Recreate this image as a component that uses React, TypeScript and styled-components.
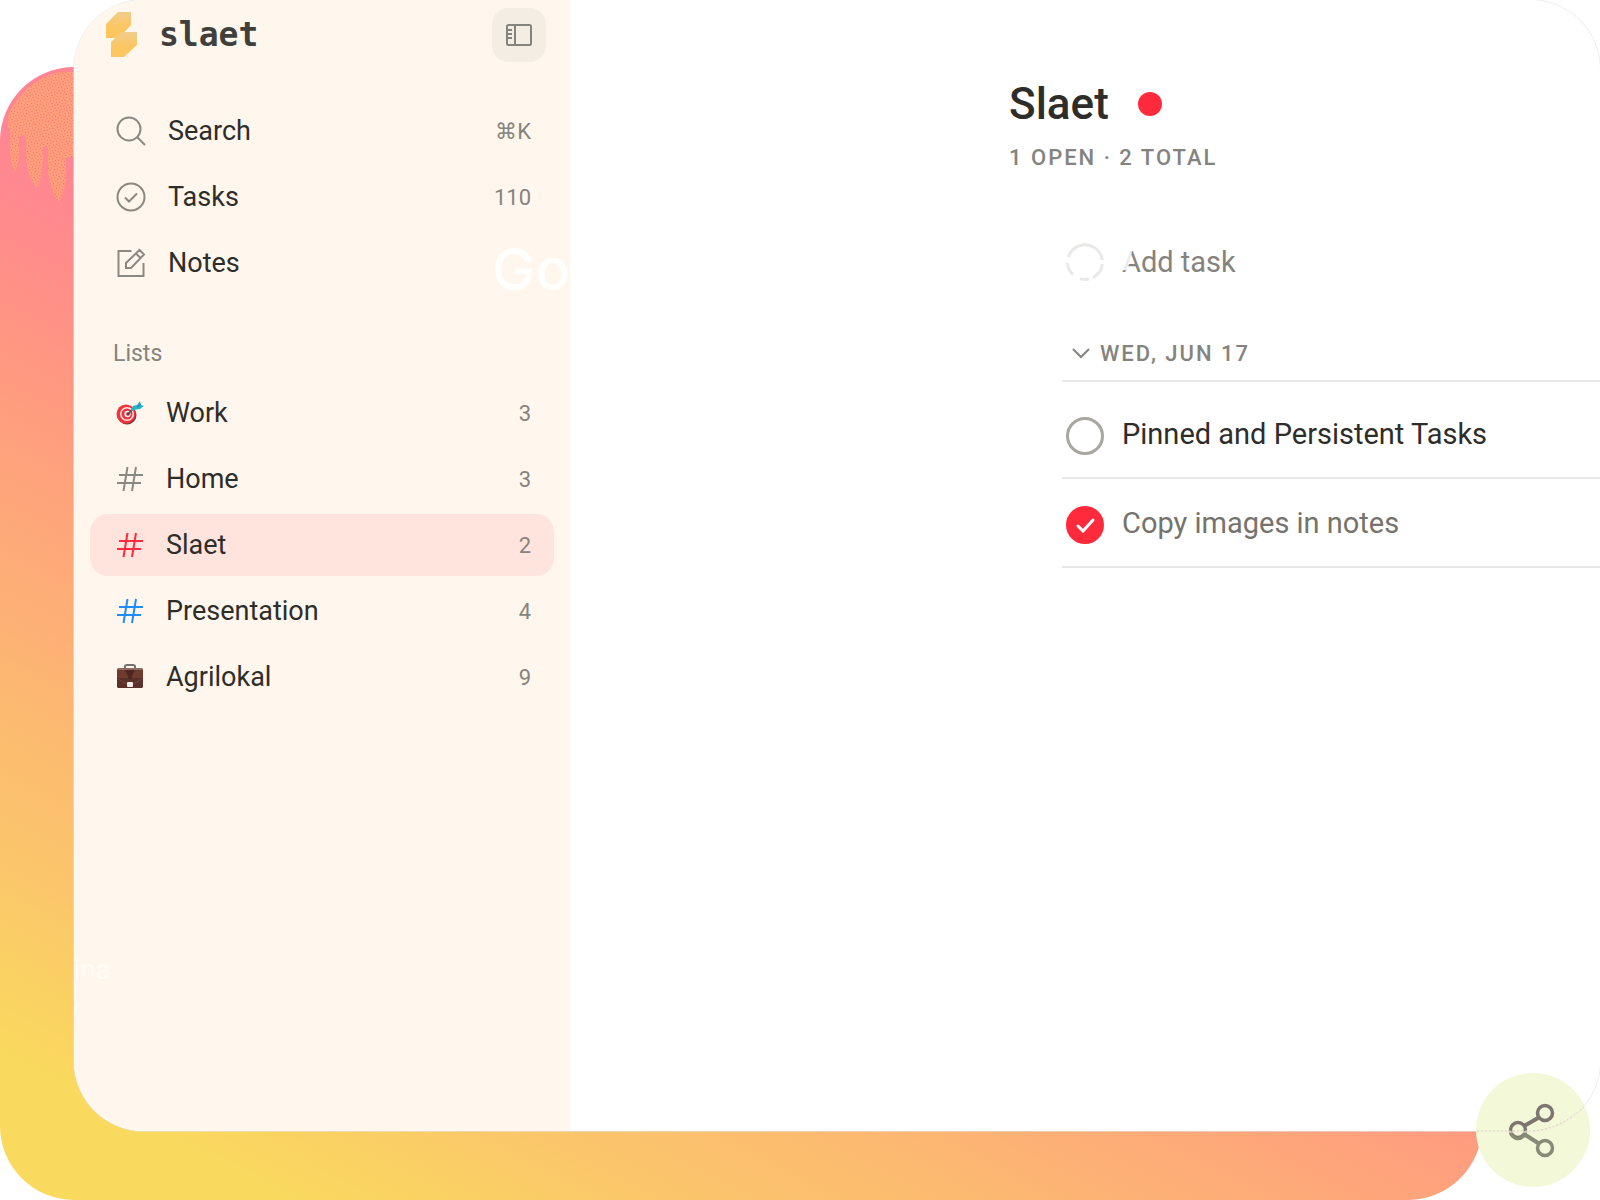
import React, { useState } from "react";
import styled, { createGlobalStyle } from "styled-components";

const GlobalStyle = createGlobalStyle`
  *, *::before, *::after { box-sizing: border-box; }
  body {
    margin: 0;
    background: #ffffff;
    color: #2e2d29;
    font-family: Roboto, "Liberation Sans", sans-serif;
  }
  button, input { font: inherit; color: inherit; }
`;

const Stage = styled.div`
  position: relative;
  display: grid;
  min-height: 100vh;
  overflow: hidden;
`;

const Backdrop = styled.div`
  grid-area: 1 / 1;
  margin: 67px 118px 0 0;
  border-radius: 74px;
  overflow: hidden;
  background: linear-gradient(
    27deg,
    #fad95f 0%,
    #fad95f 8%,
    #fad163 12%,
    #fbc66b 18%,
    #fcba70 26%,
    #fdaf76 32%,
    #fea57b 38%,
    #ff9881 45%,
    #ff8e89 50%,
    #ff8594 57%,
    #ff8594 100%
  );
`;

const Window = styled.div`
  grid-area: 1 / 1;
  display: grid;
  grid-template-columns: 496px 1fr;
  margin: 0 0 69px 74px;
  border-radius: 70px;
  overflow: hidden;
  background: #ffffff;
  box-shadow: 0 0 0 1px rgba(226, 226, 226, 0.6);
`;

const Sidebar = styled.aside`
  position: relative;
  overflow: hidden;
  padding: 8px 16px;
  background: #fff7ed;
`;

const Brand = styled.header`
  display: flex;
  align-items: center;
  height: 54px;
  padding: 0 8px 0 15px;
`;

const BrandName = styled.span`
  flex: 1;
  margin-left: 22px;
  color: #403f3b;
  font: bold 33px/40px "DejaVu Sans Mono", "Liberation Mono", monospace;
`;

const PanelToggle = styled.button`
  display: grid;
  place-items: center;
  width: 54px;
  height: 54px;
  padding: 0;
  border: 0;
  border-radius: 16px;
  background: #f4ede4;
  color: #85837e;
`;

const Nav = styled.nav`
  display: flex;
  flex-direction: column;
  gap: 4px;
  margin-top: 38px;
`;

const ListNav = styled(Nav)`
  margin-top: 14px;
`;

const NavRow = styled.a<{ $active?: boolean }>`
  display: flex;
  align-items: center;
  height: 62px;
  padding: 0 23px 0 26px;
  border-radius: 18px;
  background: ${(p) => (p.$active ? "#ffe4de" : "transparent")};
  color: #2e2d29;
  text-decoration: none;
  font-size: 27px;
  line-height: 32px;
`;

const IconSlot = styled.span<{ $color?: string }>`
  display: flex;
  width: 50px;
  color: ${(p) => p.$color || "#8a8882"};
`;

const ShortcutSlot = styled(IconSlot)`
  width: 52px;
`;

const NavLabel = styled.span`
  flex: 1;
`;

const Count = styled.span`
  padding-top: 2px;
  color: #85837e;
  font-size: 22px;
`;

const SectionLabel = styled.h2`
  margin: 46px 0 0 23px;
  color: #85837e;
  font-size: 23px;
  font-weight: 400;
  line-height: 28px;
`;

const Ghost = styled.span<{ $x: number; $y: number; $size: number; $alpha: number; $weight: number }>`
  position: absolute;
  left: ${(p) => p.$x}px;
  top: ${(p) => p.$y}px;
  color: rgba(255, 255, 255, ${(p) => p.$alpha});
  font: ${(p) => p.$weight} ${(p) => p.$size}px/1 Inter, sans-serif;
  pointer-events: none;
`;

const Main = styled.main`
  padding: 80px 0 0 439px;
  min-width: 0;
  overflow: hidden;
`;

const TitleRow = styled.div`
  display: flex;
  align-items: center;
  gap: 29px;
  height: 48px;
`;

const Title = styled.h1`
  margin: 0;
  font-size: 44px;
  font-weight: 500;
  line-height: 48px;
`;

const ColorDot = styled.span`
  width: 24px;
  height: 24px;
  border-radius: 50%;
  background: #ff2a3b;
`;

const Summary = styled.p`
  margin: 16px 0 0;
  color: #85837e;
  font-size: 22px;
  font-weight: 500;
  line-height: 28px;
  letter-spacing: 2px;
`;

const Tasks = styled.section`
  margin: 62px 0 0 53px;
`;

const AddRow = styled.label`
  position: relative;
  display: flex;
  align-items: center;
  gap: 18px;
  height: 56px;
  padding-left: 4px;
`;

const AddInput = styled.input`
  flex: 1;
  min-width: 0;
  padding: 0;
  border: 0;
  outline: 0;
  background: transparent;
  font-size: 29px;
  line-height: 36px;
  &::placeholder { color: #85837e; opacity: 1; }
`;

const Wipe = styled.span`
  position: absolute;
  left: 58px;
  top: 12px;
  width: 18px;
  height: 32px;
  background: rgba(255, 255, 255, 0.85);
  clip-path: polygon(0 0, 70% 0, 60% 45%, 36% 76%, 0 76%);
  pointer-events: none;
`;

const DayToggle = styled.button`
  display: flex;
  align-items: center;
  gap: 10px;
  width: 100%;
  height: 56px;
  margin-top: 36px;
  padding: 0 10px;
  border: 0;
  border-bottom: 2px solid #e8e8e6;
  background: transparent;
  color: #85837e;
  font-size: 22px;
  font-weight: 500;
  letter-spacing: 2px;
`;

const TaskList = styled.ul`
  margin: 0;
  padding: 8px 0 0;
  list-style: none;
`;

const TaskItem = styled.li`
  display: flex;
  align-items: center;
  gap: 18px;
  height: 89px;
  padding-left: 4px;
  border-bottom: 2px solid #e8e8e6;
  font-size: 29px;
  line-height: 36px;
`;

const Tick = styled.span`
  display: grid;
  width: 38px;
  height: 38px;
  margin-top: 4px;
  svg { grid-area: 1 / 1; pointer-events: none; }
`;

const TickBox = styled.input`
  grid-area: 1 / 1;
  appearance: none;
  width: 38px;
  height: 38px;
  margin: 0;
  border: 3px solid #a8a6a0;
  border-radius: 50%;
  &:checked { border-color: #ff2a3b; background: #ff2a3b; }
`;

const TaskLabel = styled.label<{ $done: boolean }>`
  color: ${(p) => (p.$done ? "#75736b" : "#2e2d29")};
`;

const ShareButton = styled.button`
  position: absolute;
  right: 10px;
  bottom: 13px;
  width: 114px;
  height: 114px;
  padding: 0;
  border: 0;
  border-radius: 50%;
  background: #f2f8d8;
  svg { display: block; }
`;

const Drips = () => (
  <svg width="80" height="150" viewBox="0 67 80 150" aria-hidden="true">
    <defs>
      <pattern id="speckle" width="6" height="6" patternUnits="userSpaceOnUse" patternTransform="rotate(12)">
        <rect width="6" height="6" fill="#ffa07c" />
        <rect x="0" y="0" width="1" height="1" fill="#ff5f6e" />
        <rect x="3" y="1" width="1" height="1" fill="#ff6a70" />
        <rect x="1" y="3" width="1" height="1" fill="#ff6a70" />
        <rect x="4" y="4" width="1" height="1" fill="#ff5f6e" />
      </pattern>
    </defs>
    <path
      fill="url(#speckle)"
      d="M80 72H62C40 75 20 90 8 116V127Q11 131 10 137V156Q12 171 15 171Q19 167 19 154V137Q20 134 25 136L26 137V160Q29 180 37 189Q42 178 43 160V148Q45 144 48 149V172Q51 193 59 202Q66 190 66 172V158Q67 156 72 157L80 154Z"
    />
  </svg>
);

const Logo = () => (
  <svg width="32" height="46" viewBox="0 0 32 46" aria-hidden="true">
    <defs>
      <linearGradient id="logoFade" x1="0" y1="0" x2="0" y2="1">
        <stop offset="0" stopColor="#f0cd8c" />
        <stop offset="0.6" stopColor="#fcc660" />
      </linearGradient>
    </defs>
    <path fill="url(#logoFade)" d="M13 0H26V13L14 26H1V12Z" />
    <path fill="url(#logoFade)" d="M17 20H32V33L19 45H6V30Z" />
  </svg>
);

const PanelIcon = () => (
  <svg width="26" height="22" viewBox="0 0 26 22" fill="none" stroke="currentColor" strokeWidth="2" aria-hidden="true">
    <rect x="1" y="1" width="24" height="20" rx="1.5" />
    <path d="M9 1V21M2 6H6M2 10H6M2 14H6" />
  </svg>
);

const line = { fill: "none", stroke: "currentColor", strokeWidth: 2, "aria-hidden": true } as const;

const SearchIcon = () => (
  <svg width="30" height="30" viewBox="0 0 30 30" {...line}>
    <circle cx="13" cy="13" r="11.5" />
    <path d="M21 21L29 29" />
  </svg>
);

const TasksIcon = () => (
  <svg width="30" height="30" viewBox="0 0 30 30" {...line}>
    <circle cx="15" cy="15" r="13.5" />
    <path d="M9 15.5L13 19.5L21 11.5" />
  </svg>
);

const NotesIcon = () => (
  <svg width="30" height="30" viewBox="0 0 30 30" {...line}>
    <path d="M15.500 3H2.500V28H27.500V15" />
    <path d="M10 20V15L23.500 2L28 6.500L15 20ZM20 5.500L24.500 10" />
  </svg>
);

const HashIcon = () => (
  <svg width="28" height="28" viewBox="0 0 28 28" {...line}>
    <path d="M3 10H27M1 18H25M11.500 2L7.500 26M20 2L16 26" />
  </svg>
);

const TargetIcon = () => (
  <svg width="28" height="28" viewBox="0 0 28 28" aria-hidden="true">
    <ellipse cx="11" cy="16" rx="9.500" ry="9.500" fill="#7d3a36" />
    <circle cx="10" cy="15" r="9.500" fill="#f4303b" />
    <circle cx="11" cy="15" r="7" fill="#ffe9e6" />
    <circle cx="11" cy="15" r="5.500" fill="#ee3340" />
    <circle cx="11.500" cy="15" r="3.200" fill="#ffe9e6" />
    <circle cx="12" cy="15" r="1.800" fill="#9b2a31" />
    <path d="M12 15L19 8" stroke="#37474f" strokeWidth="1.500" />
    <path d="M15 12L17 7L21 6L24 2L25 6L28 7L24 10L20 10.500Z" fill="#21b5c2" />
    <path d="M21 8L24.500 5" stroke="#2a7fe0" strokeWidth="1.200" />
  </svg>
);

const CaseIcon = () => (
  <svg width="28" height="28" viewBox="0 0 28 28" aria-hidden="true">
    <path d="M9 6V3.500Q9 2 11 2H17Q19 2 19 3.500V6" fill="none" stroke="#77716d" strokeWidth="2" />
    <rect x="1" y="5" width="26" height="20" rx="2" fill="#6f3b2f" />
    <path d="M1 15H27V23Q27 25 25 25H3Q1 25 1 23Z" fill="#5a3029" />
    <path d="M2 6H26" stroke="#9a7a70" strokeWidth="1.500" />
    <path d="M9 7L12 13V16H16V13L19 7" fill="#4a2722" />
    <path d="M2 16L11 21M26 16L17 21" stroke="#7b4438" strokeWidth="1" />
    <rect x="11" y="19" width="6" height="5" rx="1" fill="#efeeed" />
  </svg>
);

const ShareIcon = () => (
  <svg width="114" height="114" viewBox="0 0 114 114" fill="none" aria-hidden="true">
    <g stroke="#7d7570" strokeWidth="3.500">
      <path d="M48 53L62 45" strokeWidth="4" />
      <circle cx="69" cy="40" r="7.500" />
      <circle cx="42" cy="57" r="7.500" />
    </g>
    <g stroke="#868a76" strokeWidth="3.500">
      <path d="M48 61L62 70" strokeWidth="4" />
      <path d="M34.500 58A7.500 7.500 0 0 0 49.500 58" />
      <circle cx="69" cy="75" r="7.500" />
    </g>
    <path d="M1 58H57Q84 56 108 34" stroke="#c9c9c0" strokeDasharray="2 2" />
    <path d="M1 59H57Q84 57 108 35" stroke="#f6ecdd" />
  </svg>
);

const shortcuts = [
  { label: "Search", hint: "⌘K", icon: <SearchIcon /> },
  { label: "Tasks", hint: "110", icon: <TasksIcon /> },
  { label: "Notes", hint: "", icon: <NotesIcon /> },
];

const lists = [
  { label: "Work", count: 3, icon: <TargetIcon /> },
  { label: "Home", count: 3, icon: <HashIcon /> },
  { label: "Slaet", count: 2, icon: <HashIcon />, color: "#ff2a3b" },
  { label: "Presentation", count: 4, icon: <HashIcon />, color: "#1e8cff" },
  { label: "Agrilokal", count: 9, icon: <CaseIcon /> },
];

export default function App() {
  const [tasks, setTasks] = useState([
    { id: "pinned", label: "Pinned and Persistent Tasks", done: false },
    { id: "copy", label: "Copy images in notes", done: true },
  ]);
  const toggle = (id: string) =>
    setTasks(tasks.map((t) => (t.id === id ? { ...t, done: !t.done } : t)));

  return (
    <>
      <GlobalStyle />
      <Stage>
        <Backdrop>
          <Drips />
        </Backdrop>
        <Window>
          <Sidebar>
            <Brand>
              <Logo />
              <BrandName>slaet</BrandName>
              <PanelToggle type="button" aria-label="Toggle sidebar">
                <PanelIcon />
              </PanelToggle>
            </Brand>
            <Nav>
              {shortcuts.map((s) => (
                <NavRow key={s.label} href="#">
                  <ShortcutSlot>{s.icon}</ShortcutSlot>
                  <NavLabel>{s.label}</NavLabel>
                  <Count>{s.hint}</Count>
                </NavRow>
              ))}
            </Nav>
            <SectionLabel>Lists</SectionLabel>
            <ListNav>
              {lists.map((l) => (
                <NavRow key={l.label} href="#" $active={l.label === "Slaet"}>
                  <IconSlot $color={l.color}>{l.icon}</IconSlot>
                  <NavLabel>{l.label}</NavLabel>
                  <Count>{l.count}</Count>
                </NavRow>
              ))}
            </ListNav>
            <Ghost $x={418} $y={240} $size={58} $alpha={0.9} $weight={500}>Go</Ghost>
            <Ghost $x={0} $y={957} $size={26} $alpha={0.5} $weight={400}>ina</Ghost>
            <Ghost $x={-9} $y={996} $size={26} $alpha={0.5} $weight={400}>y</Ghost>
          </Sidebar>
          <Main>
            <TitleRow>
              <Title>Slaet</Title>
              <ColorDot />
            </TitleRow>
            <Summary>1 OPEN · 2 TOTAL</Summary>
            <Tasks>
              <AddRow>
                <svg width="38" height="38" viewBox="0 0 38 38" fill="none" stroke="#e9e9e7" strokeWidth="3" aria-hidden="true">
                  <path d="M2.300 14A17.500 17.500 0 0 1 36.300 17M36.400 21A17.500 17.500 0 0 1 27 34.600M23 36A17.500 17.500 0 0 1 14 35.800M7 31.700A17.500 17.500 0 0 1 1.500 20" />
                </svg>
                <AddInput type="text" placeholder="Add task" aria-label="Add task" />
                <Wipe />
              </AddRow>
              <DayToggle type="button">
                <svg width="18" height="12" viewBox="0 0 18 12" fill="none" stroke="currentColor" strokeWidth="2" aria-hidden="true">
                  <path d="M1 2L9 10L17 2" />
                </svg>
                WED, JUN 17
              </DayToggle>
              <TaskList>
                {tasks.map((t) => (
                  <TaskItem key={t.id}>
                    <Tick>
                      <TickBox id={t.id} type="checkbox" checked={t.done} onChange={() => toggle(t.id)} />
                      {t.done && (
                        <svg width="38" height="38" viewBox="0 0 38 38" fill="none" stroke="#ffffff" strokeWidth="3" aria-hidden="true">
                          <path d="M12 20L17 25L27 14" strokeLinecap="round" />
                        </svg>
                      )}
                    </Tick>
                    <TaskLabel htmlFor={t.id} $done={t.done}>{t.label}</TaskLabel>
                  </TaskItem>
                ))}
              </TaskList>
            </Tasks>
          </Main>
        </Window>
        <ShareButton type="button" aria-label="Share">
          <ShareIcon />
        </ShareButton>
      </Stage>
    </>
  );
}
